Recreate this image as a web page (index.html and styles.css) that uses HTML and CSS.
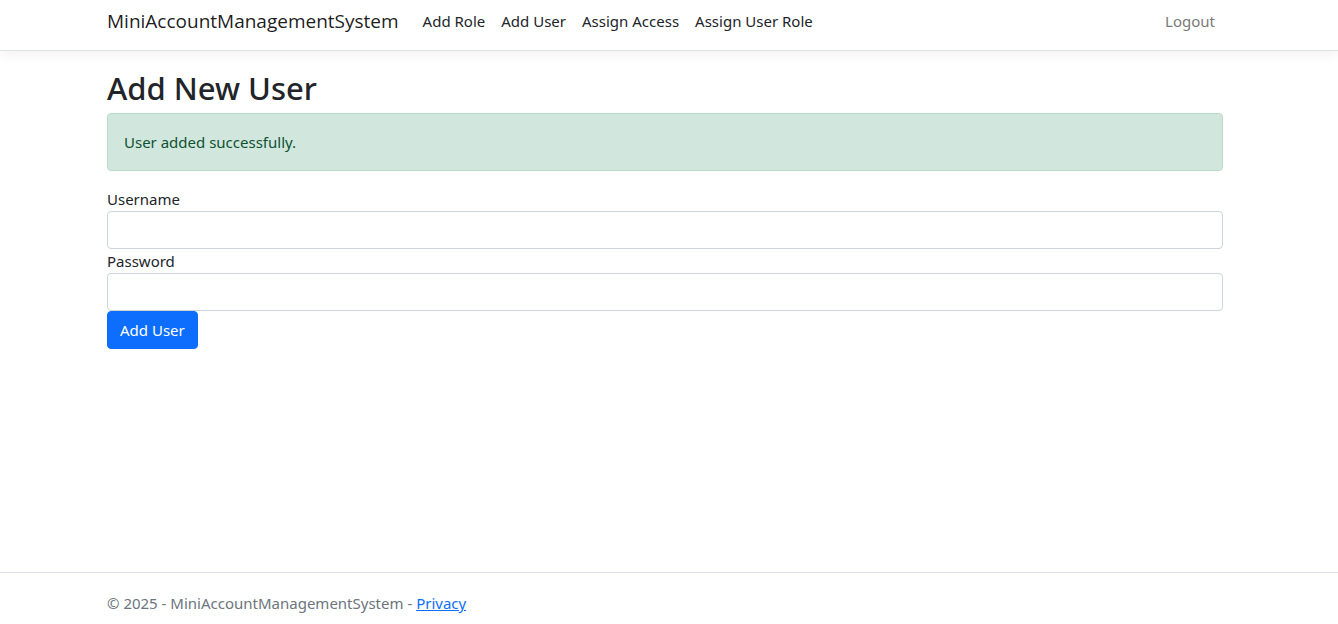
FILE: index.html
```html
<!DOCTYPE html>
<html lang="en">
<head>
<meta charset="utf-8">
<title>Add New User - MiniAccountManagementSystem</title>
<link rel="stylesheet" href="styles.css">
</head>
<body>
<header class="site-header">
  <nav class="container navbar">
    <a class="brand" href="#">MiniAccountManagementSystem</a>
    <ul class="nav-list">
      <li><a class="nav-link" href="#">Add Role</a></li>
      <li><a class="nav-link" href="#">Add User</a></li>
      <li><a class="nav-link" href="#">Assign Access</a></li>
      <li><a class="nav-link" href="#">Assign User Role</a></li>
    </ul>
    <button class="logout" type="button">Logout</button>
  </nav>
</header>
<main class="container content">
  <h1 class="title">Add New User</h1>
  <div class="alert" role="status">User added successfully.</div>
  <form class="user-form">
    <label class="label" for="username">Username</label>
    <input class="input" id="username" type="text">
    <label class="label" for="password">Password</label>
    <input class="input" id="password" type="password">
    <button class="submit" type="submit">Add User</button>
  </form>
</main>
<footer class="site-footer">
  <div class="container footer-text">&copy; 2025 - MiniAccountManagementSystem - <a class="privacy" href="#">Privacy</a></div>
</footer>
</body>
</html>
```
FILE: styles.css
```css
*, *::before, *::after { box-sizing: border-box; }
body {
  margin: 0;
  min-height: 100vh;
  display: flex;
  flex-direction: column;
  background: #fff;
  color: #212529;
  font: 15px/24px "Noto Sans", "Open Sans", sans-serif;
}
.container {
  width: 100%;
  max-width: 1140px;
  margin: 0 auto;
  padding: 0 16px 0 8px;
}
.site-header {
  padding-bottom: 8px;
  border-bottom: 1px solid #dee2e6;
  box-shadow: 0 4px 12px rgba(0, 0, 0, 0.05);
}
.navbar { display: flex; align-items: center; }
.brand {
  margin-right: 16px;
  color: rgba(0, 0, 0, 0.9);
  font-family: "Open Sans", "Noto Sans", sans-serif;
  font-size: 19px;
  line-height: 42px;
  text-decoration: none;
}
.nav-list {
  display: flex;
  flex: 1;
  margin: 0;
  padding: 0;
  list-style: none;
}
.nav-link { padding: 8px; color: #212529; text-decoration: none; }
.logout {
  padding: 8px;
  border: 0;
  background: none;
  color: #7a7a7a;
  font: inherit;
}
.content { flex: 1; padding-top: 18px; }
.title { margin: 0 0 6px; font-size: 31px; font-weight: 500; line-height: 38px; }
.alert {
  margin-bottom: 16px;
  padding: 16px;
  border: 1px solid #badbcc;
  border-radius: 4px;
  background: #d1e7dd;
  color: #0f5132;
}
.user-form { display: flex; flex-direction: column; align-items: flex-start; }
.input {
  width: 100%;
  height: 38px;
  padding: 6px 12px;
  border: 1px solid #ced4da;
  border-radius: 4px;
  background: #fff;
  font: inherit;
}
.submit {
  padding: 6px 12px;
  border: 1px solid #0d6efd;
  border-radius: 4px;
  background: #0d6efd;
  color: #fff;
  font: inherit;
}
.site-footer { border-top: 1px solid #dee2e6; }
.footer-text { padding-top: 18px; padding-bottom: 9px; color: #6c757d; }
.privacy { color: #0d6efd; }
```
